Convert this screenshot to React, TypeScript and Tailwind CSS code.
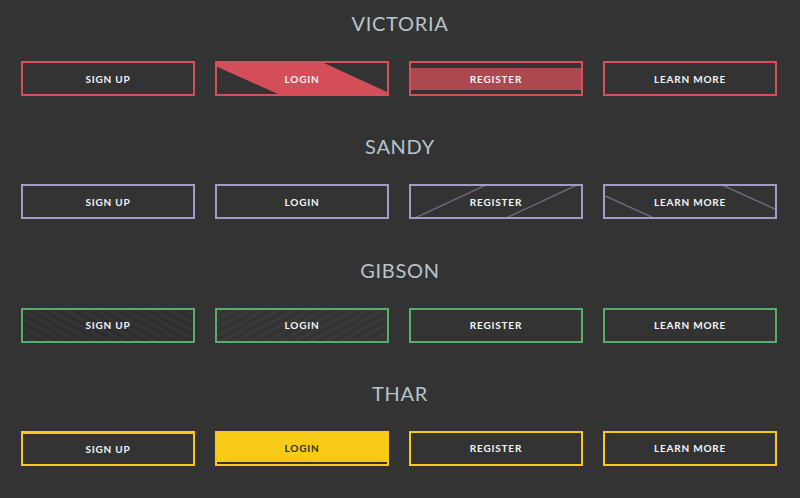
import React from "react";

const font = { fontFamily: "Lato, 'Open Sans', sans-serif" };

function Label({ children, dark }: { children: React.ReactNode; dark?: boolean }) {
  return (
    <span
      className={`relative z-10 text-[10px] font-bold tracking-[0.8px] leading-none ${dark ? "text-[#2f2f2f]" : "text-[#f4f4f6]"}`}
    >
      {children}
    </span>
  );
}

const base = "relative flex h-[35px] items-center justify-center overflow-hidden box-border";

function Title({ children }: { children: React.ReactNode }) {
  return (
    <div className="h-[24px] text-center text-[20px] leading-[24px] tracking-[0.7px] text-[#b8c3cd]">
      {children}
    </div>
  );
}

function Row({ children }: { children: React.ReactNode }) {
  return <div className="mt-[26px] grid grid-cols-4 gap-[20px] pl-[21px] pr-[23px]">{children}</div>;
}

export default function App() {
  return (
    <div className="min-h-[498px] w-[800px] bg-[#333333] pt-[11px]" style={font}>
      {/* VICTORIA */}
      <section className="pb-[38.33px]">
        <Title>VICTORIA</Title>
        <Row>
          <div className={`${base} border-2 border-[#d64f5a]`}>
            <Label>SIGN UP</Label>
          </div>
          <div className={`${base} border-2 border-[#d64f5a]`}>
            <svg className="absolute inset-0 h-full w-full" viewBox="0 0 170 31" preserveAspectRatio="none">
              <polygon points="0,0 107,0 170,29 170,31 61,31 0,3.7" fill="#d34e58" />
            </svg>
            <Label>LOGIN</Label>
          </div>
          <div className={`${base} border-2 border-[#d64f5a] py-[4.5px]`}>
            <div className="flex h-full w-full items-center justify-center bg-[#ab4850]">
              <Label>REGISTER</Label>
            </div>
          </div>
          <div className={`${base} border-2 border-[#d64f5a]`}>
            <Label>LEARN MORE</Label>
          </div>
        </Row>
      </section>

      {/* SANDY */}
      <section className="pb-[38.33px]">
        <Title>SANDY</Title>
        <Row>
          <div className={`${base} border-2 border-[#a29cc6]`}>
            <Label>SIGN UP</Label>
          </div>
          <div className={`${base} border-2 border-[#a29cc6]`}>
            <Label>LOGIN</Label>
          </div>
          <div className={`${base} border-2 border-[#a29cc6]`}>
            <svg className="absolute inset-0 h-full w-full" viewBox="0 0 170 31" preserveAspectRatio="none">
              <line x1="4" y1="32" x2="75" y2="-1" stroke="#6c667c" strokeWidth="1.5" />
              <line x1="95" y1="32" x2="166" y2="-1" stroke="#6c667c" strokeWidth="1.5" />
            </svg>
            <Label>REGISTER</Label>
          </div>
          <div className={`${base} border-2 border-[#a29cc6]`}>
            <svg className="absolute inset-0 h-full w-full" viewBox="0 0 170 31" preserveAspectRatio="none">
              <line x1="-2" y1="9" x2="51" y2="33" stroke="#6c667c" strokeWidth="1.5" />
              <line x1="117" y1="-1" x2="172" y2="24" stroke="#6c667c" strokeWidth="1.5" />
            </svg>
            <Label>LEARN MORE</Label>
          </div>
        </Row>
      </section>

      {/* GIBSON */}
      <section className="pb-[38.33px]">
        <Title>GIBSON</Title>
        <Row>
          <div
            className={`${base} border-2 border-[#5aac6b] bg-[repeating-linear-gradient(28deg,#2d2d2d_0px,#2d2d2d_3px,#333333_3px,#333333_7px)]`}
          >
            <Label>SIGN UP</Label>
          </div>
          <div
            className={`${base} border-2 border-[#5aac6b] bg-[repeating-linear-gradient(152deg,#393939_0px,#393939_3px,#333333_3px,#333333_7px)]`}
          >
            <Label>LOGIN</Label>
          </div>
          <div className={`${base} border-2 border-[#5aac6b]`}>
            <Label>REGISTER</Label>
          </div>
          <div className={`${base} border-2 border-[#5aac6b]`}>
            <Label>LEARN MORE</Label>
          </div>
        </Row>
      </section>

      {/* THAR */}
      <section className="pb-[38.33px]">
        <Title>THAR</Title>
        <Row>
          <div className={`${base} border-2 border-t-[3px] border-[#f7ca18]`}>
            <Label>SIGN UP</Label>
          </div>
          <div className={`${base} border-2 border-[#f7ca18] bg-[#f7ca18] shadow-[inset_0_-2px_0_#333333]`}>
            <Label dark>LOGIN</Label>
          </div>
          <div className={`${base} border-2 border-[#f7ca18]`}>
            <Label>REGISTER</Label>
          </div>
          <div className={`${base} border-2 border-[#f7ca18]`}>
            <Label>LEARN MORE</Label>
          </div>
        </Row>
      </section>
    </div>
  );
}
